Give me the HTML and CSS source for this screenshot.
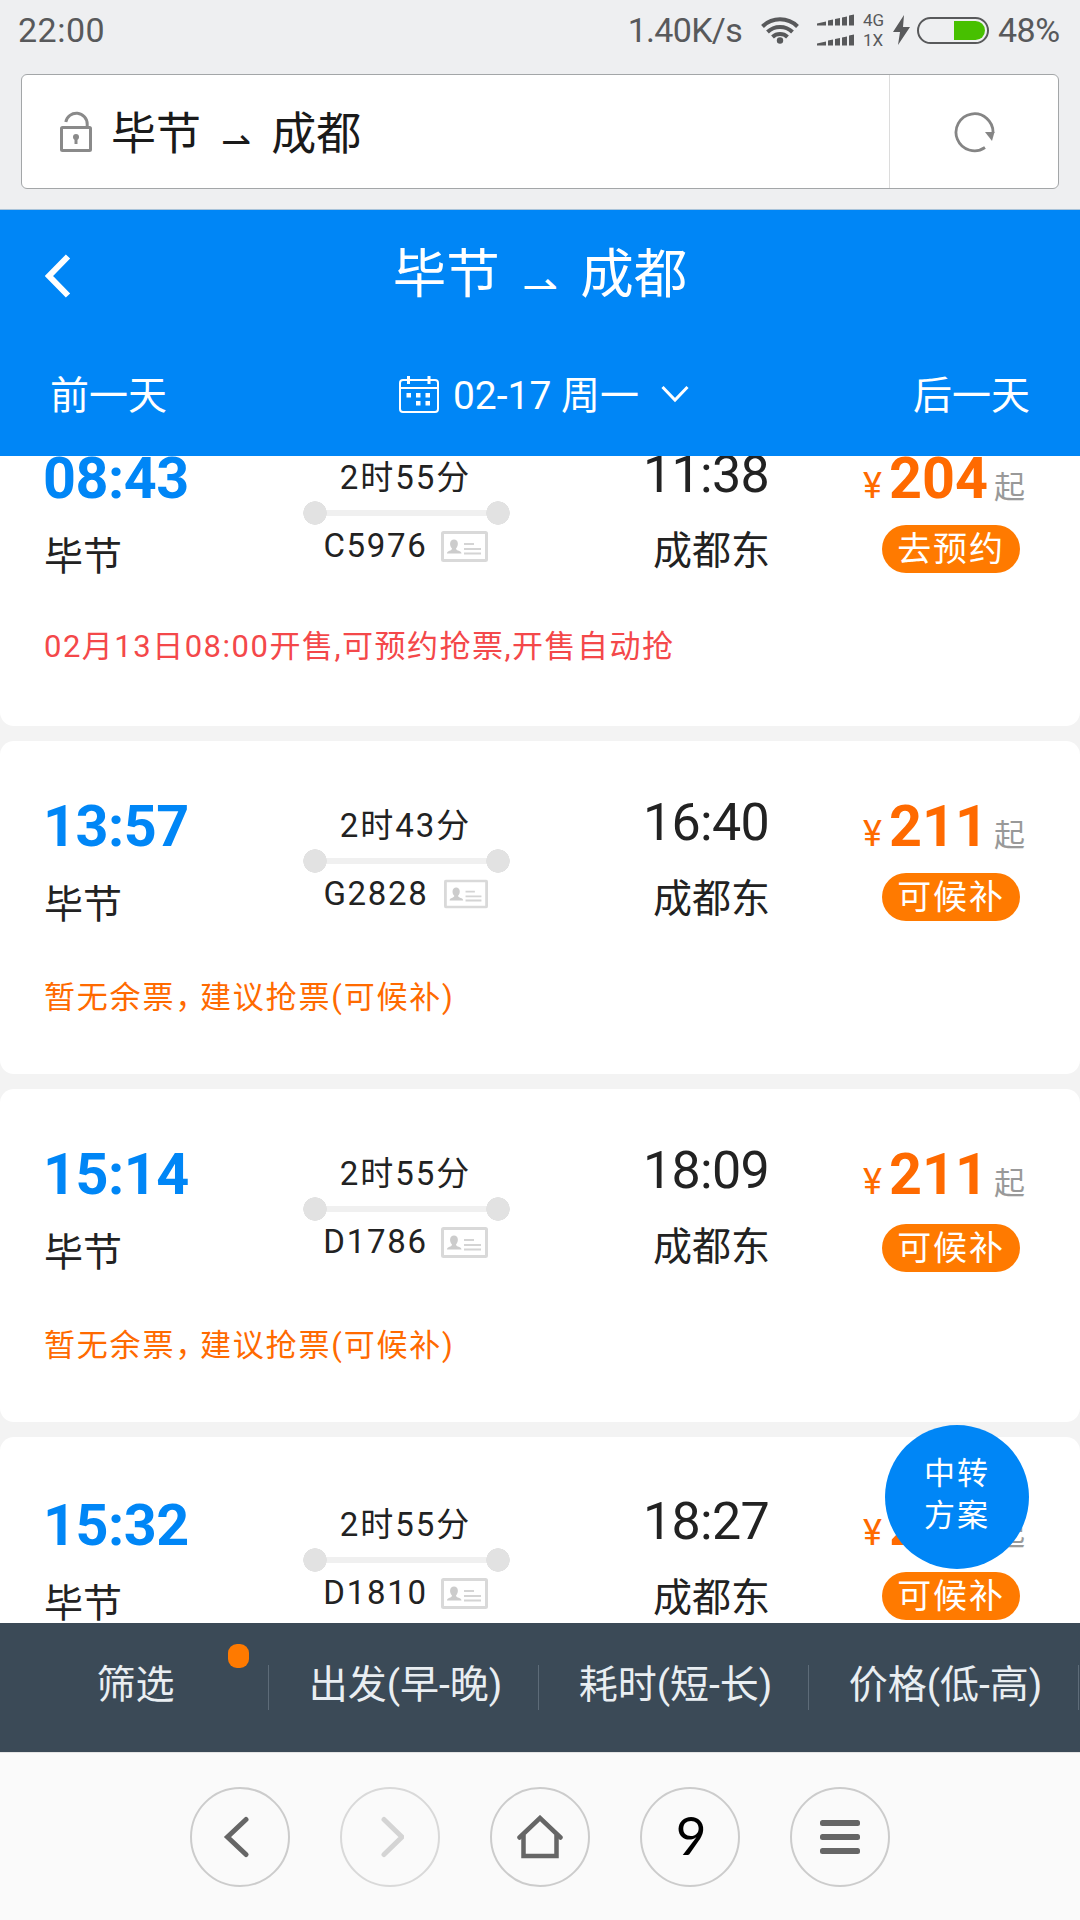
FILE: index.html
```html
<!DOCTYPE html>
<html lang="zh-CN">
<head>
  <meta charset="UTF-8">
  <meta name="viewport" content="width=device-width, initial-scale=1.0">
  <title>毕节 ⇀ 成都</title>

  <link rel="stylesheet" href="styles.css">
</head>
<body>

  <div class="statusBar">
    <span class="clock">22:00</span>
    <span class="speed">1.40K/s</span>
    <svg class="wifi" width="38" height="28" viewBox="0 0 38 28">
      <g fill="none" stroke="#58595b" stroke-width="4">
        <path d="M1.5 10.5a25 25 0 0 1 35 0"/>
        <path d="M6.5 16a18 18 0 0 1 25 0"/>
        <path d="M11.5 21a11 11 0 0 1 15 0"/>
      </g>
      <circle cx="19" cy="24.5" r="3.2" fill="#58595b"/>
    </svg>
    <svg class="signal" width="38" height="32" viewBox="0 0 38 32" fill="#58595b">
      <path d="M0 9.5l9-2v4H0zM11 6.5l5-1v6h-5zM18 5l5-1v7.500h-5zM25 3.500l5-1v9h-5zM32 1.500l5-1v11h-5z"/>
      <path d="M0 29.500l9-2v4H0zM11 26.500l5-1v6h-5zM18 25l5-1v7.500h-5zM25 23.500l5-1v9h-5zM32 21.500l5-1v11h-5z"/>
    </svg>
    <div class="network">
      <span>4G</span>
      <span>1X</span>
    </div>
    <svg class="bolt" width="17" height="30" viewBox="0 0 17 30" fill="#58595b">
      <path d="M11 0L0 17h7L5 30 17 12h-7z"/>
    </svg>
    <div class="battery"><div class="batteryLevel"></div></div>
    <span class="percent">48%</span>
  </div>

  <div class="addressBar">
    <div class="address">
      <svg width="32" height="41" viewBox="0 0 32 41" fill="none" stroke="#8a8a8a" stroke-width="3">
        <rect x="1.500" y="16.500" width="29" height="23" rx="1"/>
        <path d="M5.800 11a10.800 10.800 0 0 1 21.400 2v3"/>
        <circle cx="16" cy="26" r="3" fill="#8a8a8a" stroke="none"/>
        <path d="M16 26v7"/>
      </svg>
      <span class="url">毕节<span class="arrow">⇀</span>成都</span>
    </div>
    <div class="reload">
      <svg width="42" height="42" viewBox="0 0 42 42">
        <path d="M39 22A18.500 18.500 0 1 0 31 36.500" fill="none" stroke="#858585" stroke-width="2.800"/>
        <path d="M31 21h9.500l-2.500 9z" fill="#858585"/>
      </svg>
    </div>
  </div>

  <header>
    <div class="titleRow">
      <svg class="btnBack" width="26" height="44" viewBox="0 0 26 44">
        <path d="M23 2.500L4 22l19 19.500" fill="none" stroke="#fff" stroke-width="6"/>
      </svg>
      <h1>毕节<span class="arrow">⇀</span>成都</h1>
    </div>
    <div class="dateRow">
      <span>前一天</span>
      <div class="date">
        <svg width="40" height="38" viewBox="0 0 40 38">
          <g fill="none" stroke="#fff" stroke-width="2">
            <rect x="1" y="5" width="38" height="32" rx="3"/>
            <path d="M1 13h38"/>
          </g>
          <path d="M8 1h3v8H8zM28.500 1h3v8h-3zM7.500 18h4.500v4.500H7.500zM17 18h4.500v4.500H17zM26.500 18H31v4.500h-4.500zM17 26h4.500v4.500H17zM26.500 26H31v4.500h-4.500z" fill="#fff"/>
        </svg>
        <span>02-17 周一</span>
        <svg class="down" width="28" height="18" viewBox="0 0 28 18">
          <path d="M1.500 2L14 15 26.500 2" fill="none" stroke="#fff" stroke-width="3"/>
        </svg>
      </div>
      <span>后一天</span>
    </div>
  </header>

  <main>
    <div class="train first">
      <div class="row">
        <div class="from">
          <div class="time">08:43</div>
          <div class="station">毕节</div>
        </div>
        <div class="trip">
          <div class="duration">2时55分</div>
          <div class="track"></div>
          <div class="number">C5976 <svg class="idCard" viewBox="0 0 47 31"><use href="#card"/></svg></div>
        </div>
        <div class="to">
          <div class="time">11:38</div>
          <div class="station">成都东</div>
        </div>
        <div class="price">
          <div class="amount"><small>¥</small><b>204</b><i>起</i></div>
          <button>去预约</button>
        </div>
      </div>
      <p class="note presale">02月13日08:00开售,可预约抢票,开售自动抢</p>
    </div>

    <div class="train">
      <div class="row">
        <div class="from">
          <div class="time">13:57</div>
          <div class="station">毕节</div>
        </div>
        <div class="trip">
          <div class="duration">2时43分</div>
          <div class="track"></div>
          <div class="number">G2828 <svg class="idCard narrow" viewBox="0 0 47 31"><use href="#card"/></svg></div>
        </div>
        <div class="to">
          <div class="time">16:40</div>
          <div class="station">成都东</div>
        </div>
        <div class="price">
          <div class="amount"><small>¥</small><b>211</b><i>起</i></div>
          <button>可候补</button>
        </div>
      </div>
      <p class="note">暂无余票<span class="comma">，</span>建议抢票(可候补)</p>
    </div>

    <div class="train third">
      <div class="row">
        <div class="from">
          <div class="time">15:14</div>
          <div class="station">毕节</div>
        </div>
        <div class="trip">
          <div class="duration">2时55分</div>
          <div class="track"></div>
          <div class="number">D1786 <svg class="idCard" viewBox="0 0 47 31"><use href="#card"/></svg></div>
        </div>
        <div class="to">
          <div class="time">18:09</div>
          <div class="station">成都东</div>
        </div>
        <div class="price">
          <div class="amount"><small>¥</small><b>211</b><i>起</i></div>
          <button>可候补</button>
        </div>
      </div>
      <p class="note">暂无余票<span class="comma">，</span>建议抢票(可候补)</p>
    </div>

    <div class="train last">
      <div class="row">
        <div class="from">
          <div class="time">15:32</div>
          <div class="station">毕节</div>
        </div>
        <div class="trip">
          <div class="duration">2时55分</div>
          <div class="track"></div>
          <div class="number">D1810 <svg class="idCard" viewBox="0 0 47 31"><use href="#card"/></svg></div>
        </div>
        <div class="to">
          <div class="time">18:27</div>
          <div class="station">成都东</div>
        </div>
        <div class="price">
          <div class="amount"><small>¥</small><b>211</b><i>起</i></div>
          <button>可候补</button>
        </div>
      </div>
    </div>

    <a class="transfer">中转<br>方案</a>
  </main>

  <div class="filters">
    <div class="filter">筛选<span class="dot"></span></div>
    <div class="filter">出发(早-晚)</div>
    <div class="filter">耗时(短-长)</div>
    <div class="filter">价格(低-高)</div>
  </div>

  <nav>
    <div class="navItem">
      <svg class="prev" width="28" height="42" viewBox="0 0 28 42" fill="none" stroke="#666" stroke-width="5" stroke-linecap="round">
        <path d="M23 3.500L4.500 21 23 38.500"/>
      </svg>
    </div>
    <div class="navItem disabled">
      <svg width="28" height="42" viewBox="0 0 28 42" fill="none" stroke="#d4d4d4" stroke-width="5" stroke-linecap="round">
        <path d="M8 3.500L26 21 8 38.500"/>
      </svg>
    </div>
    <div class="navItem">
      <svg width="46" height="44" viewBox="0 0 46 44" fill="none" stroke="#666" stroke-width="4.500">
        <path d="M2.500 22.500L23 3l20.500 19.500" stroke-linecap="round"/>
        <path d="M6.500 20v21h33V20"/>
      </svg>
    </div>
    <div class="navItem tabs">9</div>
    <div class="navItem">
      <svg width="40" height="34" viewBox="0 0 40 34" fill="#666">
        <rect width="40" height="6" rx="2.500"/>
        <rect y="14" width="40" height="6" rx="2.500"/>
        <rect y="28" width="40" height="6" rx="2.500"/>
      </svg>
    </div>
  </nav>

  <svg class="symbols">
    <symbol id="card" viewBox="0 0 47 31">
      <rect x="1.500" y="1.500" width="44" height="28" rx="1" fill="none" stroke="#d9d9d9" stroke-width="3"/>
      <path d="M6 22.500c0-3 5-2.500 5-5-3-3-2.500-9 2-9s5 6 2 9c0 2.500 5.500 2 5.500 5z" fill="#ccc"/>
      <path d="M23 13h10M23 18h17M23 22.500h17" stroke="#d4d4d4" stroke-width="2"/>
    </symbol>
  </svg>

</body>
</html>
```
FILE: styles.css
```css
* {
  box-sizing: border-box;
}

body {
  margin: 0;
  height: 1920px;
  display: flex;
  flex-direction: column;
  overflow: hidden;
  font-family: Roboto, "Noto Sans CJK SC", sans-serif;
  font-weight: 400;
  color: #222;
  background-color: #eeeff1;
}

svg {
  display: block;
  flex: none;
}

.symbols {
  display: none;
}

/* 状态栏 */
.statusBar {
  height: 60px;
  padding: 0 18px;
  display: flex;
  align-items: center;
  font-size: 34px;
  line-height: 60px;
  color: #58595b;
}

.clock {
  letter-spacing: 0.5px;
}

.speed {
  margin-left: auto;
  letter-spacing: -0.7px;
}

.wifi {
  margin-left: 19px;
}

.signal {
  margin-left: 18px;
}

.network {
  width: 22px;
  margin-left: 8px;
  display: flex;
  flex-direction: column;
  font-size: 17px;
  line-height: 20px;
}

.bolt {
  margin: 0 7px 0 8px;
}

.battery {
  width: 72px;
  height: 27px;
  padding: 2px;
  border: 2px solid #58595b;
  border-radius: 14px;
}

.batteryLevel {
  width: 31px;
  height: 19px;
  margin-left: auto;
  background-color: #47c000;
  border-radius: 0 10px 10px 0;
}

.percent {
  width: 64px;
  margin-left: 9px;
  letter-spacing: -0.5px;
}

.addressBar {
  height: 115px;
  margin: 14px 21px 20px;
  display: flex;
  background-color: #fff;
  border: 1px solid #a3a6a8;
  border-radius: 6px;
}

.address {
  flex: 1;
  padding-left: 38px;
  display: flex;
  align-items: center;
  gap: 19px;
  font-size: 45px;
  color: #1a1a1a;
}

.url {
  padding-bottom: 3px;
}

.reload {
  width: 169px;
  padding-left: 2px;
  display: flex;
  justify-content: center;
  align-items: center;
  border-left: 1px solid #dcdcdc;
}

.arrow {
  display: inline-block;
  width: 1.95em;
  text-align: center;
  font-family: "DejaVu Sans", sans-serif;
  font-size: 0.8em;
  font-weight: 200;
  line-height: 1;
  vertical-align: -0.12em;
}

header {
  height: 247px;
  color: #fff;
  background-color: #0086f6;
  border-top: 1px solid #a9c3d9;
}

.titleRow {
  height: 122px;
  padding: 0 45px;
  display: grid;
  grid-template-columns: 1fr auto 1fr;
  align-items: center;
}

.btnBack {
  margin-top: 10px;
}

h1 {
  margin: 0;
  padding-top: 7px;
  font-size: 53.5px;
  line-height: 80px;
  font-weight: 400;
}

h1 .arrow {
  width: 1.88em;
  vertical-align: -0.2em;
}

.dateRow {
  height: 124px;
  padding: 0 50px;
  display: flex;
  justify-content: space-between;
  align-items: center;
  font-size: 39px;
}

.dateRow span {
  padding-bottom: 5px;
}

.date {
  margin-left: 8px;
  display: flex;
  align-items: center;
  gap: 14px;
}

.down {
  margin-left: 8px;
}

/* 车次列表 */
main {
  position: relative;
  height: 1167px;
  overflow: hidden;
  background-color: #f3f3f3;
}

.train {
  height: 333px;
  margin-bottom: 15px;
  background-color: #fff;
  border-radius: 14px;
}

.first {
  margin-top: -63px;
}

.row {
  height: 238px;
  padding: 53px 55px 0 44px;
  display: grid;
  grid-template-columns: 190px 343px 193px 1fr;
}

.from {
  padding-top: 3px;
}

.from .time {
  margin-left: -1px;
  font-size: 57.5px;
  line-height: 60px;
  font-weight: 700;
  letter-spacing: -0.5px;
  color: #0086f6;
}

.from .station {
  margin-top: 24px;
}

.station {
  font-size: 39px;
  line-height: 48px;
}

.trip {
  padding-top: 12px;
  display: flex;
  flex-direction: column;
  align-items: center;
  font-size: 33px;
  line-height: 40px;
  letter-spacing: 1.7px;
}

.duration {
  letter-spacing: 2px;
}

.track {
  width: 207px;
  height: 24px;
  margin: 3px 0 1px 2px;
  background:
    radial-gradient(circle at 12px 12px, #e2e2e2 11.5px, transparent 12px),
    radial-gradient(circle at 195px 12px, #e2e2e2 11.5px, transparent 12px),
    linear-gradient(#f0f0f0, #f0f0f0) center / 190px 6px no-repeat;
}

.number {
  display: flex;
  align-items: center;
  gap: 13px;
}

.idCard {
  width: 47px;
  height: 31px;
}

.narrow {
  width: 44px;
  height: 30px;
  margin-left: 2px;
}

.to {
  text-align: right;
}

.to .time {
  margin-right: 1px;
  font-size: 52px;
  line-height: 58px;
  letter-spacing: -0.7px;
}

.to .station {
  margin-top: 23px;
}

.price {
  padding-top: 3px;
  display: flex;
  flex-direction: column;
  align-items: flex-end;
}

.amount {
  height: 60px;
  line-height: 60px;
  white-space: nowrap;
  color: #ff6a00;
}

.amount small {
  margin-right: 7px;
  font-size: 36px;
}

.amount b {
  font-size: 57.5px;
}

.amount i {
  margin-left: 6px;
  font-size: 31px;
  font-style: normal;
  color: #999;
}

button {
  width: 138px;
  height: 48px;
  margin: 16px 5px 0 0;
  padding: 0;
  border: none;
  border-radius: 24px;
  font: inherit;
  font-size: 34px;
  line-height: 48px;
  letter-spacing: 1.8px;
  color: #fff;
  background-color: #ff7a00;
}

.third button {
  margin-top: 19px;
}

.note {
  margin: -1px 0 0;
  padding-left: 44px;
  font-size: 31px;
  line-height: 40px;
  letter-spacing: 1.8px;
  color: #ff6a00;
}

.presale {
  margin-top: -4px;
  letter-spacing: 1.5px;
  color: #f4484a;
}

.comma {
  margin: 0 -8px 0 0;
}

.last .row {
  padding-top: 56px;
}

.transfer {
  position: absolute;
  top: 969px;
  left: 885px;
  width: 144px;
  height: 144px;
  padding-top: 28px;
  border-radius: 50%;
  text-align: center;
  font-size: 31px;
  line-height: 42px;
  letter-spacing: 2px;
  color: #fff;
  background-color: #0086f6;
}

.filters {
  height: 129px;
  display: grid;
  grid-template-columns: repeat(4, 270px);
  margin-left: -1px;
  background-color: #3b4a57;
}

.filter {
  position: relative;
  height: 45px;
  margin-top: 42px;
  padding-left: 4px;
  text-align: center;
  font-size: 39px;
  line-height: 40px;
  color: #e9eef2;
  border-right: 1px solid #5d6b78;
}

.dot {
  position: absolute;
  top: -21px;
  left: 229px;
  width: 21px;
  height: 24px;
  border-radius: 9px;
  background-color: #ff7a00;
}

nav {
  height: 168px;
  padding-top: 34px;
  display: flex;
  justify-content: center;
  gap: 50px;
  background-color: #fafafa;
  border-top: 1px solid #e4e4e4;
}

.navItem {
  width: 100px;
  height: 100px;
  display: flex;
  justify-content: center;
  align-items: center;
  border: 2px solid #ccc;
  border-radius: 50%;
}

.prev {
  margin-right: 6px;
}

.disabled {
  border-color: #d9d9d9;
}

.tabs {
  padding: 0 0 6px 2px;
  font-family: Lato, sans-serif;
  font-size: 53px;
  color: #000;
}
```
